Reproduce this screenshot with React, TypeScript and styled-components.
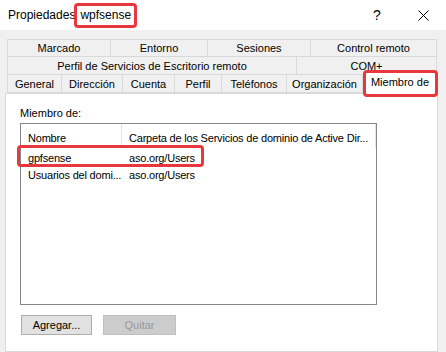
import React from "react";
import styled, { createGlobalStyle, css } from "styled-components";

const GlobalStyle = createGlobalStyle`
  html, body { margin: 0; padding: 0; }
  body {
    background: #f0f0f0;
    font-family: "Liberation Sans", Arial, sans-serif;
    font-size: 11px;
    color: #000;
    overflow: hidden;
  }
`;

const RED = "#e8383d";

const Window = styled.div`
  width: 446px;
  height: 352px;
  overflow: hidden;
  display: flex;
  flex-direction: column;
`;

const TitleBar = styled.div`
  height: 30px;
  background: #fff;
  display: flex;
  align-items: center;
  padding-left: 8px;
  box-sizing: border-box;
  font-size: 12px;
`;

const Title = styled.div`
  flex: 1;
  display: flex;
  align-items: center;
  white-space: nowrap;
`;

const Marked = styled.span`
  display: inline-block;
  border: 3px solid ${RED};
  border-radius: 4px;
  padding: 2px 3px 3px;
  margin-left: -1px;
  line-height: 14px;
  background: #fff;
`;

const TitleButton = styled.div`
  width: 46px;
  height: 30px;
  display: flex;
  align-items: center;
  justify-content: center;
  font-size: 14px;
`;

const Body = styled.div`
  flex: 1;
  padding: 9px 0 0 5px;
  display: flex;
  flex-direction: column;
`;

const TabStrip = styled.div`
  margin: 0 0 0 2px;
  width: 430px;
  display: flex;
  flex-direction: column;
`;

const TabRow = styled.div`
  display: flex;
  height: 18px;
  position: relative;
`;

const Tab = styled.div<{ $w: number; $first?: boolean; $top?: boolean; $selected?: boolean }>`
  width: ${(p) => p.$w}px;
  box-sizing: border-box;
  border-right: 1px solid #d9d9d9;
  border-left: ${(p) => (p.$first ? "1px solid #d9d9d9" : "none")};
  border-top: ${(p) => (p.$top ? "1px solid #d9d9d9" : "none")};
  border-bottom: 1px solid #d9d9d9;
  display: flex;
  align-items: center;
  justify-content: center;
  white-space: nowrap;
  line-height: 14px;
  background: #f0f0f0;
  ${(p) =>
    p.$selected &&
    css`
      position: relative;
      background: #fff;
      border: 1px solid #d9d9d9;
      border-bottom: none;
      margin-top: -3px;
      height: 22px;
      padding-bottom: 3px;
      z-index: 2;
      &::after {
        content: "";
        position: absolute;
        left: -1px;
        right: -2px;
        top: -3px;
        bottom: -3px;
        border: 3px solid ${RED};
        border-radius: 4px;
      }
    `}
`;

const Panel = styled.div`
  width: 433px;
  flex: 1;
  background: #fff;
  border: 1px solid #d9d9d9;
  box-sizing: border-box;
  padding: 12px 0 0 14px;
  display: flex;
  flex-direction: column;
  height: 270px;
`;

const Label = styled.div`
  line-height: 14px;
  height: 17px;
`;

const ListView = styled.div`
  width: 357px;
  height: 182px;
  box-sizing: border-box;
  border: 1px solid #828790;
  display: flex;
  flex-direction: column;
  letter-spacing: -0.2px;
`;

const HeaderRow = styled.div`
  display: flex;
  height: 25px;
`;

const HeaderCell = styled.div<{ $w: number }>`
  width: ${(p) => p.$w}px;
  box-sizing: border-box;
  padding: 3px 0 0 7px;
  border-right: 1px solid #e5e5e5;
  display: flex;
  align-items: center;
  white-space: nowrap;
  overflow: hidden;
  height: 24px;
`;

const Row = styled.div<{ $marked?: boolean }>`
  display: flex;
  height: 17px;
  align-items: center;
  position: relative;
  ${(p) =>
    p.$marked &&
    css`
      &::after {
        content: "";
        position: absolute;
        left: -4px;
        top: -4px;
        width: 187px;
        height: 22px;
        box-sizing: border-box;
        border: 3px solid ${RED};
        border-radius: 4px;
      }
    `}
`;

const Cell = styled.div<{ $w: number }>`
  width: ${(p) => p.$w}px;
  box-sizing: border-box;
  padding-left: 7px;
  white-space: nowrap;
  overflow: hidden;
`;

const ButtonRow = styled.div`
  display: flex;
  gap: 11px;
  margin-top: 10px;
  padding-left: 1px;
`;

const Button = styled.button<{ $w: number }>`
  width: ${(p) => p.$w}px;
  height: 20px;
  font-family: inherit;
  font-size: 11px;
  background: #e1e1e1;
  border: 1px solid #adadad;
  color: #000;
  padding: 0;
  &:disabled {
    background: #cccccc;
    border-color: #bfbfbf;
    color: #9a9a9a;
  }
`;

const row1 = [
  { t: "Marcado", w: 104 },
  { t: "Entorno", w: 97 },
  { t: "Sesiones", w: 103 },
  { t: "Control remoto", w: 126 },
];
const row2 = [
  { t: "Perfil de Servicios de Escritorio remoto", w: 290 },
  { t: "COM+", w: 140 },
];
const row3 = [
  { t: "General", w: 55 },
  { t: "Dirección", w: 61 },
  { t: "Cuenta", w: 52 },
  { t: "Perfil", w: 47 },
  { t: "Teléfonos", w: 65 },
  { t: "Organización", w: 76 },
  { t: "Miembro de", w: 74, sel: true },
];

export default function App() {
  return (
    <Window>
      <GlobalStyle />
      <TitleBar>
        <Title>
          Propiedades<Marked>wpfsense</Marked>
        </Title>
        <TitleButton>?</TitleButton>
        <TitleButton>
          <svg width="11" height="11" viewBox="0 0 11 11">
            <path d="M0.5 0.5L10.5 10.5M10.5 0.5L0.5 10.5" stroke="#000" strokeWidth="1" fill="none" />
          </svg>
        </TitleButton>
      </TitleBar>
      <Body>
        <TabStrip>
          <TabRow>
            {row1.map((r, i) => (
              <Tab key={r.t} $w={r.w} $first={i === 0} $top>
                {r.t}
              </Tab>
            ))}
          </TabRow>
          <TabRow>
            {row2.map((r, i) => (
              <Tab key={r.t} $w={r.w} $first={i === 0}>
                {r.t}
              </Tab>
            ))}
          </TabRow>
          <TabRow>
            {row3.map((r, i) => (
              <Tab key={r.t} $w={r.w} $first={i === 0} $selected={r.sel}>
                {r.t}
              </Tab>
            ))}
          </TabRow>
        </TabStrip>
        <Panel>
          <Label>Miembro de:</Label>
          <ListView>
            <HeaderRow>
              <HeaderCell $w={101}>Nombre</HeaderCell>
              <HeaderCell $w={254}>Carpeta de los Servicios de dominio de Active Dir...</HeaderCell>
            </HeaderRow>
            <Row $marked>
              <Cell $w={101}>gpfsense</Cell>
              <Cell $w={254}>aso.org/Users</Cell>
            </Row>
            <Row>
              <Cell $w={101}>Usuarios del domi...</Cell>
              <Cell $w={254}>aso.org/Users</Cell>
            </Row>
          </ListView>
          <ButtonRow>
            <Button $w={71}>Agregar...</Button>
            <Button $w={73} disabled>
              Quitar
            </Button>
          </ButtonRow>
        </Panel>
      </Body>
    </Window>
  );
}
